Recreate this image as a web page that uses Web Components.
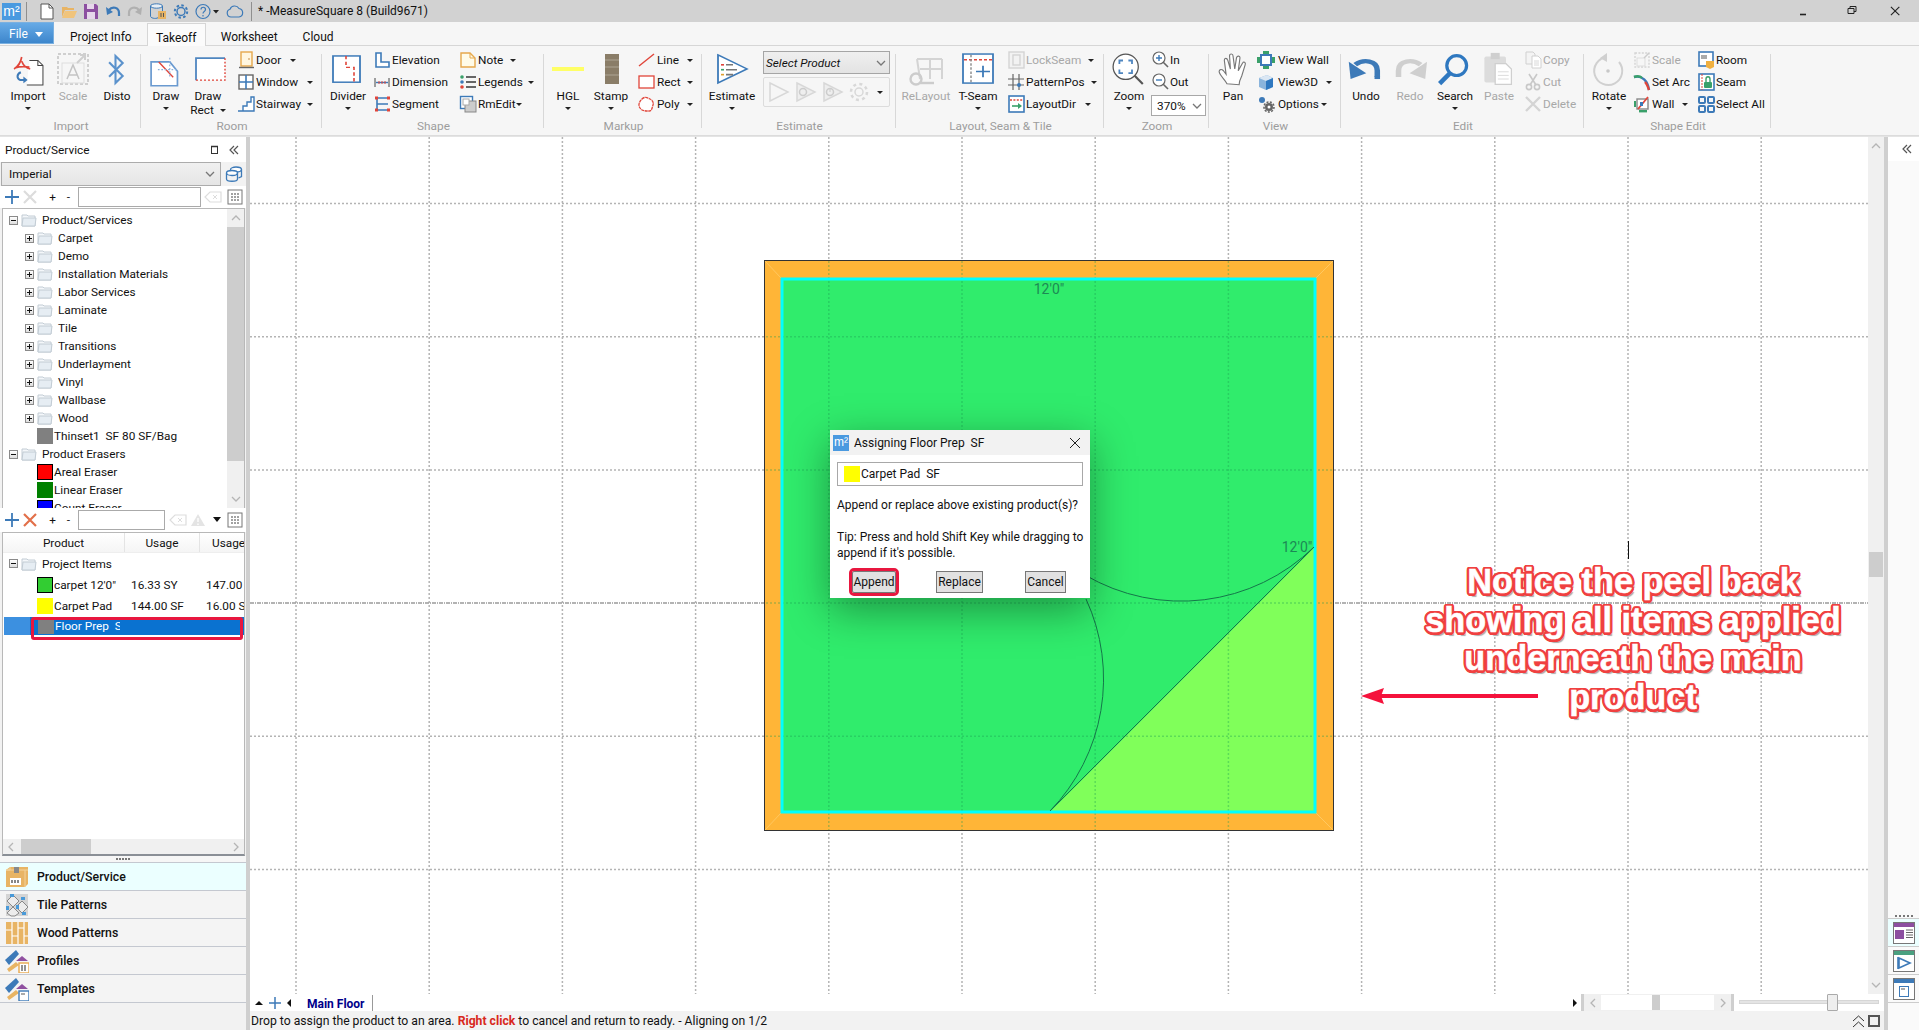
<!DOCTYPE html>
<html>
<head>
<meta charset="utf-8">
<title>MeasureSquare 8</title>
<style>
  html, body { margin: 0; padding: 0; height: 100%; overflow: hidden; background: #fff; }
</style>
</head>
<body>
<ms-app>
  <ms-titlebar slot="title"></ms-titlebar>
  <ms-tabs slot="tabs"></ms-tabs>
  <ms-ribbon slot="ribbon">
    <rb-group label="Import" w="141" pad="4">
      <rb-large icon="import" label="Import" w="48" arrow></rb-large>
      <rb-large icon="scale" label="Scale" w="42" off></rb-large>
      <rb-large icon="disto" label="Disto" w="46"></rb-large>
    </rb-group>
    <rb-group label="Room" w="181" pad="5">
      <rb-large icon="draw" label="Draw" w="40" arrow></rb-large>
      <rb-large icon="drawrect" label="Draw" second="Rect" w="44"></rb-large>
      <rb-col left="7">
        <rb-small icon="door" label="Door" w="62" arrow></rb-small>
        <rb-small icon="window" label="Window" w="79" arrow></rb-small>
        <rb-small icon="stair" label="Stairway" w="79" arrow></rb-small>
      </rb-col>
    </rb-group>
    <rb-group label="Shape" w="222" pad="4">
      <rb-large icon="divider" label="Divider" w="44" arrow></rb-large>
      <rb-col left="3">
        <rb-small icon="elevation" label="Elevation" w="84"></rb-small>
        <rb-small icon="dimension" label="Dimension" w="84"></rb-small>
        <rb-small icon="segment" label="Segment" w="84"></rb-small>
      </rb-col>
      <rb-col left="2">
        <rb-small icon="note" label="Note" w="60" arrow></rb-small>
        <rb-small icon="legends" label="Legends" w="78" arrow></rb-small>
        <rb-small icon="rmedit" label="RmEdit" w="65" arrow></rb-small>
      </rb-col>
    </rb-group>
    <rb-group label="Markup" w="158" pad="4">
      <rb-large icon="hgl" label="HGL" w="40" arrow></rb-large>
      <rb-large icon="stamp" label="Stamp" w="46" arrow></rb-large>
      <rb-col left="4">
        <rb-small icon="line" label="Line" w="58" arrow></rb-small>
        <rb-small icon="rect" label="Rect" w="58" arrow></rb-small>
        <rb-small icon="poly" label="Poly" w="58" arrow></rb-small>
      </rb-col>
    </rb-group>
    <rb-group label="Estimate" w="194" pad="2">
      <rb-large icon="estimate" label="Estimate" w="56" arrow></rb-large>
      <rb-estimate></rb-estimate>
    </rb-group>
    <rb-group label="Layout, Seam &amp; Tile" w="208" pad="2">
      <rb-large icon="relayout" label="ReLayout" w="56" off></rb-large>
      <rb-large icon="tseam" label="T-Seam" w="48" arrow></rb-large>
      <rb-col left="5">
        <rb-small icon="lockseam" label="LockSeam" w="90" arrow off></rb-small>
        <rb-small icon="patternpos" label="PatternPos" w="93" arrow></rb-small>
        <rb-small icon="layoutdir" label="LayoutDir" w="87" arrow></rb-small>
      </rb-col>
    </rb-group>
    <rb-group label="Zoom" w="105" pad="4">
      <rb-large icon="zoom" label="Zoom" w="42" arrow></rb-large>
      <rb-col left="1">
        <rb-small icon="zin" label="In" w="50"></rb-small>
        <rb-small icon="zout" label="Out" w="50"></rb-small>
        <rb-percent></rb-percent>
      </rb-col>
    </rb-group>
    <rb-group label="View" w="132" pad="4">
      <rb-large icon="pan" label="Pan" w="40"></rb-large>
      <rb-col left="4">
        <rb-small icon="viewwall" label="View Wall" w="76" iw="21"></rb-small>
        <rb-small icon="view3d" label="View3D" w="78" iw="21" arrow></rb-small>
        <rb-small icon="options" label="Options" w="73" iw="21" arrow></rb-small>
      </rb-col>
    </rb-group>
    <rb-group label="Edit" w="243" pad="5">
      <rb-large icon="undo" label="Undo" w="40"></rb-large>
      <rb-large icon="redo" label="Redo" w="48" off></rb-large>
      <rb-large icon="search" label="Search" w="42" arrow></rb-large>
      <rb-large icon="paste" label="Paste" w="46" off></rb-large>
      <rb-col left="2">
        <rb-small icon="copy" label="Copy" w="56" off></rb-small>
        <rb-small icon="cut" label="Cut" w="56" off></rb-small>
        <rb-small icon="del" label="Delete" w="56" off></rb-small>
      </rb-col>
    </rb-group>
    <rb-group label="Shape Edit" w="187" pad="4">
      <rb-large icon="rotate" label="Rotate" w="42" arrow></rb-large>
      <rb-col left="3">
        <rb-small icon="scale16" label="Scale" w="62" off></rb-small>
        <rb-small icon="setarc" label="Set Arc" w="62"></rb-small>
        <rb-small icon="wall" label="Wall" w="58" arrow iw="19"></rb-small>
      </rb-col>
      <rb-col left="2">
        <rb-small icon="room" label="Room" w="72"></rb-small>
        <rb-small icon="seam" label="Seam" w="72"></rb-small>
        <rb-small icon="selectall" label="Select All" w="72"></rb-small>
      </rb-col>
    </rb-group>
  </ms-ribbon>

  <ms-sidebar slot="side">
    <tree-row slot="tree" level="0" open label="Product/Services"></tree-row>
    <tree-row slot="tree" level="1" label="Carpet"></tree-row>
    <tree-row slot="tree" level="1" label="Demo"></tree-row>
    <tree-row slot="tree" level="1" label="Installation Materials"></tree-row>
    <tree-row slot="tree" level="1" label="Labor Services"></tree-row>
    <tree-row slot="tree" level="1" label="Laminate"></tree-row>
    <tree-row slot="tree" level="1" label="Tile"></tree-row>
    <tree-row slot="tree" level="1" label="Transitions"></tree-row>
    <tree-row slot="tree" level="1" label="Underlayment"></tree-row>
    <tree-row slot="tree" level="1" label="Vinyl"></tree-row>
    <tree-row slot="tree" level="1" label="Wallbase"></tree-row>
    <tree-row slot="tree" level="1" label="Wood"></tree-row>
    <tree-row slot="tree" swatch="#808080" label="Thinset1  SF 80 SF/Bag"></tree-row>
    <tree-row slot="tree" level="0" open label="Product Erasers"></tree-row>
    <tree-row slot="tree" swatch="#ff0000" edge label="Areal Eraser"></tree-row>
    <tree-row slot="tree" swatch="#008000" label="Linear Eraser"></tree-row>
    <tree-row slot="tree" swatch="#0000ff" edge label="Count Eraser"></tree-row>

    <tree-row slot="items" level="0" open label="Project Items" tall></tree-row>
    <item-row slot="items" swatch="#32cd32" edge label="carpet 12'0&quot;" a="16.33 SY" b="147.00"></item-row>
    <item-row slot="items" swatch="#ffff00" label="Carpet Pad" a="144.00 SF" b="16.00 S"></item-row>
    <item-row slot="items" swatch="#808080" label="Floor Prep  SF" selected></item-row>

    <nav-item slot="nav" icon="box" label="Product/Service" active></nav-item>
    <nav-item slot="nav" icon="tile" label="Tile Patterns"></nav-item>
    <nav-item slot="nav" icon="wood" label="Wood Patterns"></nav-item>
    <nav-item slot="nav" icon="profile" label="Profiles"></nav-item>
    <nav-item slot="nav" icon="template" label="Templates"></nav-item>
  </ms-sidebar>

  <ms-canvas slot="canvas">
    <ms-dialog></ms-dialog>
    <ms-callout></ms-callout>
  </ms-canvas>
  <ms-tabbar slot="tabbar"></ms-tabbar>
  <ms-status slot="status"></ms-status>
  <ms-strip slot="strip"></ms-strip>
</ms-app>

<script>
const BLUE = '#3d7ab8', RED = '#e0453a', GREY = '#cfcfcf', DARK = '#555';
const fit = (t, body) => `<g transform="${t}">${body}</g>`;

// large ribbon icons, drawn in a 40x38 box
const large = {
  import: fit('translate(3.5 4.3) scale(.85)', `<path d="M21 6h10l6 6v23H18" fill="#fff" stroke="#444" stroke-width="1.2"/><path d="M31 6v6h6" fill="none" stroke="#444" stroke-width="1.2"/><path d="M12 2c-1 6-4 11-9 14M12 7c2 5 5 8 10 9M4 15c6-2 11-2 17-1" fill="none" stroke="${RED}" stroke-width="2"/><path d="M11 20c-5 2-5 7-1 9h7" fill="none" stroke="${BLUE}" stroke-width="2.4"/><path d="M14 25l5 4-5 4z" fill="${BLUE}"/>`),
  scale: `<rect x="5" y="3" width="30" height="30" fill="none" stroke="${GREY}" stroke-width="2" stroke-dasharray="3 2"/><path d="M14 28l6-14 6 14M16 24h8" fill="none" stroke="#c4c4c4" stroke-width="1.5"/><rect x="9" y="12" width="22" height="20" fill="none" stroke="#ddd"/><path d="M24 12l8-8M27 4h5v5" fill="none" stroke="${GREY}" stroke-width="2"/>`,
  disto: fit('translate(2.5 3.3) scale(.8)', `<path d="M12 10l17 17-9 9V2l9 9-17 17" fill="none" stroke="#5b92cc" stroke-width="2.6"/>`),
  draw: fit('translate(0 5) scale(.85)', `<path d="M6 7h22l9 11v17H6z" fill="#fff" stroke="#6a9ad0" stroke-width="2"/><path d="M15 7l17 18" stroke="${RED}" stroke-width="1.6"/><path d="M14 16h24M28 2v22" stroke="#8ab0dc" stroke-width="1.4" stroke-dasharray="2 2"/>`),
  drawrect: fit('translate(4 1) scale(1 .88)', `<rect x="4" y="7" width="29" height="25" fill="#fff"/><path d="M4 32V7h29" fill="none" stroke="#4f86c0" stroke-width="1.8"/><path d="M33 7v25H4" fill="none" stroke="${RED}" stroke-width="1.4" stroke-dasharray="2 2"/>`),
  divider: fit('translate(-2 2.5) scale(1 .82)', `<rect x="7" y="3" width="27" height="32" fill="#fff" stroke="#3d7ab8" stroke-width="1.8"/><path d="M20 3v14h8v18" fill="none" stroke="${RED}" stroke-width="1.6" stroke-dasharray="4 3"/>`),
  hgl: `<rect x="4" y="16" width="32" height="4" fill="#ffff66"/>`,
  stamp: `<rect x="14" y="3" width="14" height="30" fill="#8a7d68"/><path d="M14 9h14M14 16h14M14 24h14" stroke="#9c917e" stroke-width="2"/>`,
  estimate: fit('translate(-2 1.5) scale(1 .82)', `<path d="M8 3l29 17-29 17z" fill="#fff" stroke="#3d7ab8" stroke-width="1.8"/><path d="M11 15h3" stroke="${RED}" stroke-width="2"/><path d="M11 21h3" stroke="#3aa06a" stroke-width="2"/><path d="M11 27h3" stroke="#e0a030" stroke-width="2"/><path d="M16 15h7M16 21h11M16 27h7" stroke="#777" stroke-width="2"/>`),
  relayout: `<path d="M11 8h25M11 8l3 20M24 8v20M36 8v20M14 18h22" fill="none" stroke="#d4d4d4" stroke-width="2"/><circle cx="10" cy="28" r="5.500" fill="none" stroke="#ccc" stroke-width="2.400"/><path d="M14 32h14" stroke="#ccc" stroke-width="2.400"/>`,
  tseam: fit('translate(0 2.2) scale(1 .83)', `<rect x="5" y="1" width="30" height="35" fill="#fff" stroke="#3d7ab8" stroke-width="1.8"/><path d="M6 8h28" stroke="${RED}" stroke-width="1.8" stroke-dasharray="3 2"/><path d="M13 2v33" stroke="#888" stroke-width="1.4" stroke-dasharray="3 2"/><path d="M25 15v14M18 22h14" stroke="#3d7ab8" stroke-width="1.8"/>`),
  zoom: fit('translate(.5 .5) scale(.9)', `<circle cx="18" cy="17" r="14" fill="#fff" stroke="#555" stroke-width="1.4"/><path d="M28 27l9 9" stroke="#555" stroke-width="2.4"/><path d="M11 14v-4h4M21 10h4v4M25 20v4h-4M15 24h-4v-4" fill="none" stroke="#4f86c0" stroke-width="2"/>`),
  pan: fit('translate(3.5 1.5) scale(.87)', `<path d="M12 36c-2-5-8-9-9-14 0-3 3-3 5-1l3 4L9 9c0-3 3-3 4 0l3 10-1-15c0-3 4-3 4 0l2 15 2-13c1-3 4-2 4 0l-2 15 5-9c1-2 4-1 3 2l-4 13c-2 4-3 6-3 10z" fill="#fff" stroke="#777" stroke-width="1.3"/>`),
  undo: fit('translate(0 5) scale(.92 .72)', `<path d="M10 12c9-8 24-6 24 8v9" fill="none" stroke="#3d7ab8" stroke-width="6"/><path d="M37 30h-6" stroke="#3d7ab8" stroke-width="4"/><path d="M3 8l2 24 17-8z" fill="#3d7ab8"/>`),
  redo: fit('translate(3 5) scale(.92 .72)', `<path d="M30 12c-9-8-24-6-24 8v9" fill="none" stroke="#cfcfcf" stroke-width="6"/><path d="M37 8l-2 24-17-8z" fill="#cfcfcf"/>`),
  search: fit('translate(1 2) scale(.9)', `<circle cx="23" cy="14" r="11" fill="none" stroke="#2f78c0" stroke-width="3.6"/><path d="M15 23L4 34" stroke="#2f78c0" stroke-width="5"/>`),
  paste: fit('translate(0 1) scale(.9)', `<rect x="6" y="5" width="24" height="29" rx="2" fill="#dcdcdc"/><rect x="13" y="1" width="10" height="7" fill="#cfcfcf"/><path d="M18 13h12l6 6v17H18z" fill="#fff" stroke="#cfcfcf" stroke-width="1.4"/><path d="M21 22h12M21 26h12M21 30h12" stroke="#d8d8d8"/>`),
  rotate: `<path d="M18 6a14 14 0 1 0 12 5" fill="none" stroke="#d0d0d0" stroke-width="2"/><path d="M18 2v9l-7-4z" fill="#d0d0d0"/><circle cx="19" cy="20" r="1.800" fill="#c8c8c8"/>`
};

// small ribbon icons, 18x18
const small = {
  door: `<rect x="4" y="1" width="11" height="14" fill="#fff6e0" stroke="#e6a84c" stroke-width="1.4"/><path d="M2 16.5h15" stroke="#666" stroke-width="1.4"/><circle cx="12" cy="8" r=".8" fill="#c08030"/>`,
  window: `<rect x="2" y="2" width="14" height="14" fill="#fff" stroke="#666" stroke-width="1.4"/><path d="M9 2v14M2 9h14" stroke="#3d7ab8" stroke-width="1.6"/>`,
  stair: `<path d="M1 16h5v-5h4V7h4V2h3v14z" fill="#fff" stroke="#3d7ab8" stroke-width="1.4"/>`,
  elevation: `<path d="M3 2h5v9h8v5H3z" fill="#fff" stroke="#3d7ab8" stroke-width="1.6"/>`,
  dimension: `<path d="M2 5v9M16 5v9" stroke="#888" stroke-width="1.6"/><path d="M3 9.5h12" stroke="#3d7ab8" stroke-width="1.4"/><path d="M6 8v3M9 8v3M12 8v3" stroke="${RED}" stroke-width="1"/>`,
  segment: `<path d="M4 3h11M4 9h11M4 15h11M4 3v12" fill="none" stroke="#3d7ab8" stroke-width="1.6"/><rect x="2" y="1.5" width="3" height="3" fill="${RED}"/><rect x="14" y="1.5" width="3" height="3" fill="${RED}"/><rect x="2" y="13.5" width="3" height="3" fill="${RED}"/><rect x="14" y="13.5" width="3" height="3" fill="${RED}"/>`,
  note: `<path d="M2 2h9l5 5v9H2z" fill="#fffbe8" stroke="#e6a84c" stroke-width="1.4"/><path d="M11 2v5h5" fill="none" stroke="#e6a84c"/>`,
  legends: `<circle cx="3" cy="4" r="1.8" fill="#3aa06a"/><circle cx="3" cy="9" r="1.8" fill="#3d7ab8"/><circle cx="3" cy="14" r="1.8" fill="${RED}"/><path d="M7 4h10M7 9h10M7 14h10" stroke="#666" stroke-width="2"/>`,
  rmedit: `<rect x="1.5" y="1.5" width="12" height="12" fill="#fff" stroke="#3d7ab8" stroke-width="1.4"/><rect x="6" y="6" width="11" height="11" fill="#ccc" stroke="#888"/><rect x="4" y="4" width="6" height="6" fill="#fff" stroke="#aaa"/>`,
  line: `<path d="M1 15L16 3" stroke="${RED}" stroke-width="1.4"/>`,
  rect: `<rect x="1" y="3" width="15" height="12" fill="#fff" stroke="${RED}" stroke-width="1.3"/>`,
  poly: `<path d="M4 4c3-3 6-1 8 0s4 3 3 6-1 6-4 6-7 0-9-3-1-6 2-9z" fill="#fff" stroke="${RED}" stroke-width="1.3" stroke-dasharray="3 .6"/>`,
  lockseam: `<rect x="2" y="1" width="15" height="16" fill="#f2f2f2" stroke="#d4d4d4" stroke-width="1.4"/><rect x="6" y="4" width="7" height="10" fill="none" stroke="#d4d4d4" stroke-width="1.4"/>`,
  patternpos: `<path d="M6 1v16M12 1v16M1 6h16M1 12h16" stroke="#666" stroke-width="1.2"/><circle cx="12" cy="12" r="2" fill="#3d7ab8"/>`,
  layoutdir: `<rect x="2" y="1" width="15" height="16" fill="#fff" stroke="#3d7ab8" stroke-width="1.6"/><path d="M3 5h13" stroke="${RED}" stroke-dasharray="2 1.4" stroke-width="1.4"/><path d="M5 11h8" stroke="#3aa06a" stroke-width="1.6"/><path d="M11 8l4 3-4 3z" fill="#3aa06a"/>`,
  zin: `<circle cx="8" cy="7" r="6" fill="#fff" stroke="#666" stroke-width="1.2"/><path d="M12 11l5 5" stroke="#666" stroke-width="1.6"/><path d="M8 4v6M5 7h6" stroke="#3d7ab8" stroke-width="1.4"/>`,
  zout: `<circle cx="8" cy="7" r="6" fill="#fff" stroke="#666" stroke-width="1.2"/><path d="M12 11l5 5" stroke="#666" stroke-width="1.6"/><path d="M5 7h6" stroke="#3d7ab8" stroke-width="1.4"/>`,
  viewwall: `<rect x="4" y="4" width="10" height="10" fill="#fff" stroke="#3d7ab8" stroke-width="2"/><rect x="0" y="6" width="3" height="6" fill="#3aa06a"/><rect x="15" y="6" width="3" height="6" fill="#3aa06a"/><rect x="6" y="0" width="6" height="3" fill="#3aa06a"/><rect x="6" y="15" width="6" height="3" fill="#3aa06a"/>`,
  view3d: `<path d="M2 5l8-3 6 3v9l-7 3-7-3z" fill="#8ab4dc"/><path d="M2 5l7 3 7-3-6-3z" fill="#dbe7f3"/><path d="M9 8v9l7-3V5z" fill="#2f78c0"/>`,
  options: `<circle cx="5" cy="5" r="3" fill="#3d7ab8"/><circle cx="12" cy="12" r="4" fill="#666"/><circle cx="12" cy="12" r="5" fill="none" stroke="#666" stroke-width="1.6" stroke-dasharray="2 1.4"/><circle cx="12" cy="12" r="1.5" fill="#fff"/>`,
  copy: `<path d="M2 1h7l2 2v10H2z" fill="#f4f4f4" stroke="#d0d0d0"/><path d="M8 5h6l3 3v9H8z" fill="#fff" stroke="#d0d0d0"/><path d="M10 10h5M10 12h5M10 14h5" stroke="#d8d8d8"/>`,
  cut: `<path d="M5 1l7 11M13 1L6 12" stroke="#c8c8c8" stroke-width="1.6"/><circle cx="5" cy="14" r="2.6" fill="none" stroke="#c8c8c8" stroke-width="1.6"/><circle cx="13" cy="14" r="2.6" fill="none" stroke="#c8c8c8" stroke-width="1.6"/>`,
  del: `<path d="M2 2l14 14M16 2L2 16" stroke="#d4d4d4" stroke-width="2.4"/>`,
  scale16: `<rect x="2" y="2" width="14" height="14" fill="none" stroke="#d4d4d4" stroke-width="1.4" stroke-dasharray="2 1.4"/><rect x="4" y="7" width="8" height="8" fill="none" stroke="#ddd"/><path d="M11 7l5-5" stroke="#ccc" stroke-width="1.4"/>`,
  setarc: `<path d="M1 4c8-2 14 4 15 13" fill="none" stroke="#3d7ab8" stroke-width="2.4"/><path d="M1 4c3-1 6-1 8 1" fill="none" stroke="#3aa06a" stroke-width="2.4"/><path d="M12 9c2 2 3 5 4 8" fill="none" stroke="${RED}" stroke-width="2.4"/>`,
  wall: `<rect x="4" y="4" width="11" height="10" fill="#fff" stroke="#888" stroke-width="1.4"/><path d="M5 14L15 2" stroke="${RED}" stroke-width="1.8"/><rect x="1" y="6" width="2" height="6" fill="#3aa06a"/><rect x="6" y="15" width="8" height="2.4" fill="#3aa06a"/><rect x="7" y="7" width="3" height="4" fill="#3d7ab8"/>`,
  room: `<rect x="2" y="1" width="14" height="14" fill="#fff" stroke="#3d7ab8" stroke-width="1.6"/><rect x="4" y="4" width="6" height="4" fill="#aaa"/><path d="M9 10h8v6l-4 2-4-2z" fill="#f0b040"/>`,
  seam: `<rect x="2" y="1" width="15" height="16" fill="#fff" stroke="#3d7ab8" stroke-width="1.6"/><path d="M5 1v16" stroke="${RED}" stroke-width="1" stroke-dasharray="2 1"/><rect x="7" y="9" width="8" height="6" rx="1" fill="#3aa06a"/><path d="M9 9V6c0-3 4-3 4 0v3" fill="none" stroke="#3aa06a" stroke-width="1.4"/>`,
  selectall: `<rect x="2" y="2" width="6" height="6" rx="1" fill="none" stroke="#3d7ab8" stroke-width="2"/><rect x="11" y="2" width="6" height="6" rx="1" fill="none" stroke="#3d7ab8" stroke-width="2"/><rect x="2" y="11" width="6" height="6" rx="1" fill="none" stroke="#3d7ab8" stroke-width="2"/><rect x="11" y="11" width="6" height="6" rx="1" fill="none" stroke="#3d7ab8" stroke-width="2"/>`
};

// left navigation icons, 24x24
const navIcons = {
  box: `<path d="M1 5l4-3h18v17l-3 3H1z" fill="#e8b464"/><path d="M5 2v3H1M20 5h3M20 5v17M1 5h19" stroke="#f3d39c" fill="none"/><rect x="9" y="2" width="5" height="6" fill="#888"/><rect x="5" y="13" width="11" height="7" fill="#fff"/><path d="M7 15v3M10 15v3M13 15v3" stroke="#555" stroke-width="1.4"/>`,
  tile: `<rect x="1" y="1" width="22" height="22" fill="#d4d4d4"/><path d="M8 2l6 6-6 6-6-6zM17 8l6 6-6 6-6-6zM8 14l6 6-4 3H6l-4-3z" fill="#ececec" stroke="#888"/><rect x="5" y="1" width="4" height="3" fill="#4a9ad8"/><rect x="16" y="4" width="4" height="3" fill="#4a9ad8"/><rect x="1" y="13" width="3" height="4" fill="#4a9ad8"/><rect x="11" y="12" width="3" height="4" fill="#4a9ad8"/><rect x="17" y="19" width="4" height="3" fill="#4a9ad8"/>`,
  wood: `<rect x="1" y="1" width="22" height="22" fill="#e8b464"/><path d="M7 1v22M13 1v22M19 1v22M1 9h6M13 7h6M7 15h6M19 15h4" stroke="#fff" stroke-width="1.2"/>`,
  profile: `<path d="M0 11L11 1l3 4L4 16z" fill="#3d7ab8"/><path d="M17 7l6 5H11z" fill="#9050a0"/><path d="M4 23l-2-3 9-7 3 3z" fill="#e8b464"/><rect x="14" y="14" width="10" height="10" fill="#fff" stroke="#e8a84c" stroke-width="1.4"/><path d="M17 16v6M20 16v6" stroke="#666" stroke-width="1.4"/>`,
  template: `<path d="M0 11L11 1l3 4L4 16z" fill="#3d7ab8"/><path d="M17 7l6 5H11z" fill="#9050a0"/><path d="M4 23l-2-3 9-7 3 3z" fill="#e8b464"/><rect x="14" y="14" width="10" height="10" fill="#fff" stroke="#3d7ab8" stroke-width="1.4"/><rect x="16" y="16" width="4" height="2" fill="#aaa"/>`
};

const folder = `<svg width="16" height="14" viewBox="0 0 16 14"><path d="M1 2h5l1 1h7v10H1z" fill="#f4f7fa" stroke="#c2ccd4"/><path d="M1 13l1-8h13l-1 8z" fill="#e6edf3" stroke="#c2ccd4"/></svg>`;
const chev = (d, c) => `<svg width="12" height="12" viewBox="0 0 12 12"><path d="${d}" fill="none" stroke="${c || '#b5b5b5'}" stroke-width="1.3"/></svg>`;
const CH_UP = 'M2 8l4-4 4 4', CH_DOWN = 'M2 4l4 4 4-4', CH_LEFT = 'M8 2L4 6l4 4', CH_RIGHT = 'M4 2l4 4-4 4';

function def(name, html, init) {
  let tmpl = document.createElement('template');
  tmpl.innerHTML = html;
  customElements.define(name, class extends HTMLElement {
    constructor() {
      super();
      this.attachShadow({mode: 'open'}).appendChild(tmpl.content.cloneNode(true));
    }
    connectedCallback() {
      if (init) init(this, this.shadowRoot);
    }
  });
}

def('ms-app', `
  <style>
    :host {
      display: grid;
      width: 1919px;
      height: 1030px;
      overflow: hidden;
      grid-template-columns: 246px 4px 1fr 4px 31px;
      grid-template-rows: 22px 24px 90px 1px 1fr 17px 19px;
      font: 11.800px Roboto, "Liberation Sans", sans-serif;
      color: #111;
      background: #fff;
    }
    ::slotted([slot=title]) { grid-column: 1 / -1; }
    ::slotted([slot=tabs]) { grid-column: 1 / -1; }
    ::slotted([slot=ribbon]) { grid-column: 1 / -1; }
    .rule { grid-column: 1 / -1; background: #e4e4e4; }
    ::slotted([slot=side]) { grid-column: 1; grid-row: 5 / 8; }
    .bar { grid-column: 2; grid-row: 5 / 8; background: #cfcfcf; }
    ::slotted([slot=canvas]) { grid-column: 3; grid-row: 5; }
    ::slotted([slot=tabbar]) { grid-column: 3; grid-row: 6; }
    ::slotted([slot=status]) { grid-column: 3; grid-row: 7; }
    .bar2 { grid-column: 4; grid-row: 5 / 8; background: #cfcfcf; }
    ::slotted([slot=strip]) { grid-column: 5; grid-row: 5 / 8; }
  </style>
  <slot name="title"></slot>
  <slot name="tabs"></slot>
  <slot name="ribbon"></slot>
  <div class="rule"></div>
  <slot name="side"></slot>
  <div class="bar"></div>
  <slot name="canvas"></slot>
  <slot name="tabbar"></slot>
  <slot name="status"></slot>
  <div class="bar2"></div>
  <slot name="strip"></slot>
`);

def('ms-titlebar', `
  <style>
    :host { display: flex; align-items: center; background: #d2d2d2; height: 22px; font-size: 12px; white-space: nowrap; }
    .logo { width: 19px; height: 17px; margin-left: 2px; background: #4a9ae0; color: #fff; font: 14px/16px "Liberation Sans", sans-serif; text-align: center; }
    .sep { width: 1px; height: 19px; background: #8f8f8f; margin: 0 5px; }
    svg { display: block; }
    .qat { display: flex; align-items: center; gap: 6px; margin-left: 7px; }
    .t { margin-left: 1px; }
    .win { margin-left: auto; display: flex; align-items: center; }
    .win svg { width: 47px; height: 12px; }
  </style>
  <div class="logo">m²</div><div class="sep"></div>
  <div class="qat">
    <svg width="16" height="17" viewBox="0 0 16 17"><path d="M2 1h8l4 4v11H2z" fill="#fff" stroke="#555"/><path d="M10 1v4h4" fill="none" stroke="#555"/></svg>
    <svg width="16" height="17" viewBox="0 0 16 17"><path d="M1 4h5l1 1h6v2H4l-3 7z" fill="#e8b464"/><path d="M4 8h12l-3 7H1z" fill="#f0c47c"/></svg>
    <svg width="16" height="17" viewBox="0 0 16 17"><path d="M1 1h12l2 2v13H1z" fill="#8c4fa0"/><rect x="4" y="1" width="7" height="5" fill="#e6d6ea"/><rect x="4" y="9" width="8" height="7" fill="#e6d6ea"/></svg>
    <svg width="16" height="17" viewBox="0 0 16 17"><path d="M4 7c3-4 10-3 10 3v3" fill="none" stroke="#3d7ab8" stroke-width="2.2"/><path d="M1 4l1 8 6-3z" fill="#3d7ab8"/></svg>
    <svg width="16" height="17" viewBox="0 0 16 17"><path d="M12 7C9 3 2 4 2 10v3" fill="none" stroke="#b0b0b0" stroke-width="2.2"/><path d="M15 4l-1 8-6-3z" fill="#b0b0b0"/></svg>
    <svg width="18" height="17" viewBox="0 0 18 17"><ellipse cx="7.500" cy="3" rx="6" ry="2.200" fill="#e8eef4" stroke="${BLUE}"/><path d="M1.500 3v10c0 3 8 3 8 1M13.500 3v5" fill="none" stroke="${BLUE}"/><rect x="9" y="8" width="8" height="8" fill="#e8b464"/><path d="M12 10v4M14.500 10v4" stroke="#555"/></svg>
    <svg width="16" height="17" viewBox="0 0 16 17"><circle cx="8" cy="8.500" r="4" fill="none" stroke="${BLUE}" stroke-width="1.500"/><circle cx="8" cy="8.500" r="6.200" fill="none" stroke="${BLUE}" stroke-width="2" stroke-dasharray="2.500 2.300"/></svg>
    <svg width="25" height="17" viewBox="0 0 25 17"><circle cx="8" cy="8.500" r="7" fill="none" stroke="${BLUE}" stroke-width="1.200"/><path d="M6 6.500c0-3 4.500-3 4.500 0 0 2-2.500 2-2.500 4M8 12v1.500" fill="none" stroke="${BLUE}" stroke-width="1.200"/><path d="M18 7h6l-3 3.500z" fill="#222"/></svg>
    <svg width="18" height="17" viewBox="0 0 18 17"><path d="M5 14a4 4 0 0 1-1-7.800A5 5 0 0 1 13 5.500a4.300 4.300 0 0 1 0 8.500z" fill="none" stroke="${BLUE}" stroke-width="1.200"/></svg>
  </div>
  <div class="sep" style="margin-left:7px"></div>
  <span class="t">* -MeasureSquare 8 (Build9671)</span>
  <div class="win">
    <svg viewBox="0 0 47 12"><path d="M19 9.500h6" stroke="#222" stroke-width="1.600"/></svg>
    <svg viewBox="0 0 47 12"><path d="M20 3.500h6v5h-6zM22 3.500V1.500h6v5h-2" fill="none" stroke="#222"/></svg>
    <svg viewBox="0 0 47 12" style="width:44px"><path d="M17 1.500l9 9M26 1.500l-9 9" stroke="#222" stroke-width="1.200"/></svg>
  </div>
`);

def('ms-tabs', `
  <style>
    :host { display: flex; align-items: flex-start; height: 24px; background: #f6f6f6; box-sizing: border-box; border-bottom: 1px solid #d6d6d6; font-size: 12px; white-space: nowrap; }
    .file { width: 54px; height: 22px; background: linear-gradient(#66aae6, #3d86cc); color: #fff; border: 1px solid #7ab0e0; border-left: 0; box-sizing: border-box; display: flex; align-items: center; gap: 7px; padding: 2px 0 0 9px; }
    .file i { border: 4px solid transparent; border-top: 5px solid #fff; border-bottom: 0; }
    span { height: 24px; box-sizing: border-box; padding-top: 5px; line-height: 20px; }
    .on { background: #fbfbfb; margin-top: 1px; padding-top: 4px; width: 59px; text-align: center; border: 1px solid #d6d6d6; border-bottom: 1px solid #fbfbfb; }
  </style>
  <div class="file">File <i></i></div>
  <span style="margin-left:16px">Project Info</span>
  <span class="on" style="margin-left:15px">Takeoff</span>
  <span style="margin-left:15px">Worksheet</span>
  <span style="margin-left:25px">Cloud</span>
`);

def('ms-ribbon', `
  <style>
    :host { display: flex; height: 90px; background: #f6f6f6; box-sizing: border-box; border-bottom: 1px solid #dcdcdc; }
  </style>
  <slot></slot>
`);

def('rb-group', `
  <style>
    :host { display: flex; flex-direction: column; height: 89px; box-sizing: border-box; position: relative; }
    .c { display: flex; height: 72px; padding-top: 5px; box-sizing: border-box; }
    .l { height: 16px; line-height: 16px; text-align: center; color: #9d9d9d; padding-left: 1px; }
    .s { position: absolute; right: 0; top: 8px; height: 74px; width: 1px; background: #d8d8d8; }
  </style>
  <div class="c"><slot></slot></div>
  <div class="l"></div>
  <div class="s"></div>
`, (el, root) => {
  el.style.width = el.getAttribute('w') + 'px';
  root.querySelector('.c').style.paddingLeft = el.getAttribute('pad') + 'px';
  root.querySelector('.l').textContent = el.getAttribute('label');
});

def('rb-large', `
  <style>
    :host { display: flex; flex-direction: column; align-items: center; flex: none; }
    svg { display: block; width: 40px; height: 38px; flex: none; }
    span { line-height: 14px; height: 14px; white-space: nowrap; }
    :host([off]) span { color: #a8a8a8; }
    i { display: block; margin-top: 4px; border: 3px solid transparent; border-top: 3.5px solid #222; border-bottom: 0; }
    i[hidden] { display: none; }
    b { display: inline-block; vertical-align: middle; margin-left: 3px; border: 3px solid transparent; border-top: 3.5px solid #222; border-bottom: 0; }
  </style>
  <svg viewBox="0 0 40 38"></svg>
  <span class="a"></span>
  <span class="b" hidden></span>
  <i hidden></i>
`, (el, root) => {
  el.style.width = el.getAttribute('w') + 'px';
  root.querySelector('svg').innerHTML = large[el.getAttribute('icon')];
  root.querySelector('.a').textContent = el.getAttribute('label');
  if (el.hasAttribute('arrow')) root.querySelector('i').hidden = false;
  if (el.hasAttribute('second')) {
    let b = root.querySelector('.b');
    b.hidden = false;
    b.innerHTML = el.getAttribute('second') + ' <b></b>';
  }
});

def('rb-col', `
  <style>
    :host { display: flex; flex-direction: column; gap: 4px; flex: none; }
  </style>
  <slot></slot>
`, el => { el.style.marginLeft = el.getAttribute('left') + 'px'; });

def('rb-small', `
  <style>
    :host { display: flex; align-items: center; height: 18px; flex: none; white-space: nowrap; box-sizing: border-box; }
    svg { display: block; width: 18px; height: 18px; flex: none; margin-right: 1px; }
    :host([off]) span { color: #a8a8a8; }
    i { margin-left: auto; margin-right: 3px; border: 3px solid transparent; border-top: 3.5px solid #222; border-bottom: 0; }
  </style>
  <svg viewBox="0 0 18 18"></svg><span></span><i hidden></i>
`, (el, root) => {
  el.style.width = el.getAttribute('w') + 'px';
  let s = root.querySelector('svg');
  s.innerHTML = small[el.getAttribute('icon')];
  if (el.hasAttribute('iw')) s.style.marginRight = (el.getAttribute('iw') - 18) + 'px';
  root.querySelector('span').textContent = el.getAttribute('label');
  if (el.hasAttribute('arrow')) root.querySelector('i').hidden = false;
});

def('rb-estimate', `
  <style>
    :host { display: flex; flex-direction: column; gap: 3px; width: 127px; margin-left: 3px; flex: none; }
    .sel { height: 23px; box-sizing: border-box; border: 1px solid #a5a5a5; background: linear-gradient(#efefef, #e3e3e3); display: flex; align-items: center; padding: 0 2px; font-style: italic; justify-content: space-between; white-space: nowrap; }
    .box { height: 30px; box-sizing: border-box; border: 1px solid #dcdcdc; border-radius: 2px; display: flex; align-items: center; gap: 5px; padding: 0 4px; }
    .box svg { display: block; }
    .box i { margin-left: auto; margin-right: 2px; border: 3px solid transparent; border-top: 3.5px solid #222; border-bottom: 0; }
  </style>
  <div class="sel">Select Product ${chev(CH_DOWN, '#777')}</div>
  <div class="box">
    <svg width="22" height="22" viewBox="0 0 22 22"><path d="M2 2l18 9-18 9z" fill="none" stroke="#d8d8d8" stroke-width="1.500"/></svg>
    <svg width="22" height="22" viewBox="0 0 22 22"><path d="M2 2l18 9-18 9z" fill="#eee" stroke="#d8d8d8" stroke-width="1.500"/><circle cx="8" cy="11" r="3.500" fill="none" stroke="#ccc" stroke-width="1.500"/></svg>
    <svg width="22" height="22" viewBox="0 0 22 22"><path d="M2 2l18 9-18 9z" fill="#eee" stroke="#d8d8d8" stroke-width="1.500"/><circle cx="8" cy="11" r="3.500" fill="none" stroke="#ccc" stroke-width="1.500"/><path d="M8 7v4" stroke="#ccc"/></svg>
    <svg width="20" height="22" viewBox="0 0 20 22"><circle cx="10" cy="11" r="4" fill="none" stroke="#d8d8d8" stroke-width="1.500"/><circle cx="10" cy="11" r="8" fill="none" stroke="#d8d8d8" stroke-width="2.500" stroke-dasharray="3 3.300"/></svg>
    <i></i>
  </div>
`);

def('rb-percent', `
  <style>
    :host { display: flex; align-items: center; justify-content: space-between; width: 55px; height: 21px; box-sizing: border-box; border: 1px solid #a8a8a8; background: #fff; padding: 0 2px 0 5px; }
    svg { display: block; }
  </style>
  370% ${chev(CH_DOWN, '#777')}
`);

// ------ left side ------
def('ms-sidebar', `
  <style>
    :host { display: flex; flex-direction: column; background: #f2f2f2; min-height: 0; white-space: nowrap; }
    svg { display: block; }
    .head { display: flex; align-items: center; height: 25px; padding: 0 5px; background: #fff; }
    .head span { flex: 1; }
    .combo { display: flex; align-items: center; height: 24px; }
    .sel { width: 220px; margin-left: 1px; box-sizing: border-box; height: 24px; border: 1px solid #acacac; background: linear-gradient(#f0f0f0, #e5e5e5); display: flex; align-items: center; justify-content: space-between; padding: 0 4px 0 7px; }
    .combo svg { margin-left: 4px; }
    .tool { display: flex; align-items: center; height: 22px; background: #fff; padding-left: 4px; }
    .tool .p { width: 15px; text-align: center; }
    input { display: block; box-sizing: border-box; height: 20px; border: 1px solid #aaa; padding: 0; background: #fff; }
    .tree { height: 300px; margin: 0 1px 0 2px; border: 1px solid #b8b8b8; border-bottom: 0; box-sizing: border-box; background: #fff; display: flex; overflow: hidden; }
    .rows { flex: 1; min-width: 0; padding-top: 2px; }
    .vs { width: 17px; background: #f0f0f0; display: flex; flex-direction: column; align-items: center; justify-content: space-between; position: relative; }
    .vs b { display: block; width: 17px; height: 234px; background: #cdcdcd; position: absolute; top: 18px; }
    .vs span { height: 18px; display: flex; align-items: center; }
    .items { flex: 1; min-height: 0; margin: 0 1px 0 2px; border: 1px solid #b8b8b8; border-bottom: 2px solid #8a8f96; background: #fff; display: flex; flex-direction: column; position: relative; overflow: hidden; }
    .th { display: grid; grid-template-columns: 122px 75px 1fr; height: 20px; background: linear-gradient(#fff, #f5f5f5); border-bottom: 1px solid #eee; box-sizing: border-box; flex: none; }
    .th span { text-align: center; line-height: 20px; border-right: 1px solid #e4e4e4; overflow: hidden; }
    .th span:last-child { text-align: left; padding-left: 12px; border: 0; }
    .list { flex: 1; min-height: 0; }
    .hs { flex: none; height: 15px; background: #f0f0f0; display: flex; align-items: center; justify-content: space-between; padding: 0 2px; position: relative; }
    .hs b { position: absolute; left: 18px; width: 70px; height: 15px; background: #cdcdcd; }
    .mark { position: absolute; left: 28px; top: 84px; width: 212px; height: 23px; box-sizing: border-box; border: 3px solid #e8173f; border-radius: 3px; }
    .grip { height: 6px; display: flex; align-items: center; justify-content: center; gap: 1px; background: #f6f6f6; }
    .grip i { width: 2px; height: 2px; background: #777; }
    .nav { border-top: 1px solid #c4c8d0; }
  </style>
  <div class="head">
    <span>Product/Service</span>
    <svg width="12" height="12" viewBox="0 0 12 12" style="margin-right:6px"><rect x="2.500" y="2.500" width="6" height="7" fill="none" stroke="#333"/><path d="M2 2.500h7" stroke="#333" stroke-width="1.500"/></svg>
    <svg width="14" height="14" viewBox="0 0 14 14"><path d="M7 3L3 7l4 4M11 3L7 7l4 4" fill="none" stroke="#555" stroke-width="1.200"/></svg>
  </div>
  <div class="combo">
    <div class="sel">Imperial ${chev(CH_DOWN, '#777')}</div>
    <svg width="18" height="18" viewBox="0 0 18 18"><ellipse cx="11" cy="4.500" rx="5.500" ry="2.500" fill="#fff" stroke="${BLUE}" stroke-width="1.300"/><path d="M16.500 4.500v7l-3 1.500" fill="none" stroke="${BLUE}" stroke-width="1.300"/><ellipse cx="7" cy="8" rx="5.500" ry="2.500" fill="#fff" stroke="${BLUE}" stroke-width="1.300"/><path d="M1.500 8v6c0 3 11 3 11 0V8" fill="none" stroke="${BLUE}" stroke-width="1.300"/></svg>
  </div>
  <div class="tool">
    <svg width="16" height="16" viewBox="0 0 16 16"><path d="M8 1v14M1 8h14" stroke="${BLUE}" stroke-width="1.800"/></svg>
    <svg width="16" height="16" viewBox="0 0 16 16" style="margin-left:2px"><path d="M2 2l12 12M14 2L2 14" stroke="#dcdcdc" stroke-width="2.200"/></svg>
    <span class="p" style="margin-left:7px">+</span><span class="p" style="margin-left:1px">-</span>
    <input style="width:123px;margin-left:2px">
    <svg width="18" height="14" viewBox="0 0 18 14" style="margin-left:3px"><path d="M6 2h11v10H6L1 7z" fill="none" stroke="#ddd" stroke-width="1.200"/><path d="M9 5l4 4M13 5l-4 4" stroke="#ddd"/></svg>
    <svg width="16" height="16" viewBox="0 0 16 16" style="margin-left:5px"><rect x="1" y="1" width="14" height="14" fill="#fff" stroke="#777"/><path d="M4 5h8M4 8h8M4 11h8" stroke="#444" stroke-dasharray="2 1"/></svg>
  </div>
  <div class="tree">
    <div class="rows"><slot name="tree"></slot></div>
    <div class="vs"><span>${chev(CH_UP)}</span><b></b><span>${chev(CH_DOWN)}</span></div>
  </div>
  <div class="tool" style="height:24px">
    <svg width="16" height="16" viewBox="0 0 16 16"><path d="M8 1v14M1 8h14" stroke="${BLUE}" stroke-width="1.800"/></svg>
    <svg width="16" height="16" viewBox="0 0 16 16" style="margin-left:2px"><path d="M2 2l12 12M14 2L2 14" stroke="#e2704a" stroke-width="2.200"/></svg>
    <span class="p" style="margin-left:7px">+</span><span class="p" style="margin-left:1px">-</span>
    <input style="width:87px;margin-left:2px">
    <svg width="18" height="14" viewBox="0 0 18 14" style="margin-left:4px"><path d="M6 2h11v10H6L1 7z" fill="none" stroke="#ddd" stroke-width="1.200"/><path d="M9 5l4 4M13 5l-4 4" stroke="#ddd"/></svg>
    <svg width="16" height="16" viewBox="0 0 16 16" style="margin-left:3px"><path d="M8 2l7 12H1z" fill="#e4e4e4"/><path d="M8 6v4M8 11.500v1.500" stroke="#fff" stroke-width="1.300"/></svg>
    <svg width="10" height="6" viewBox="0 0 10 6" style="margin-left:6px"><path d="M1 0h8L5 5z" fill="#111"/></svg>
    <svg width="16" height="16" viewBox="0 0 16 16" style="margin-left:5px"><rect x="1" y="1" width="14" height="14" fill="#fff" stroke="#777"/><path d="M4 5h8M4 8h8M4 11h8" stroke="#444" stroke-dasharray="2 1"/></svg>
  </div>
  <div class="items">
    <div class="th"><span>Product</span><span>Usage</span><span>Usage</span></div>
    <div class="list"><slot name="items"></slot></div>
    <div class="hs">${chev(CH_LEFT)}<b></b>${chev(CH_RIGHT)}</div>
    <div class="mark"></div>
  </div>
  <div class="grip"><i></i><i></i><i></i><i></i><i></i></div>
  <div class="nav"><slot name="nav"></slot></div>
  <div style="height:27px"></div>
`);

def('tree-row', `
  <style>
    :host { display: flex; align-items: center; height: 18px; white-space: pre; }
    .t { width: 9px; height: 9px; box-sizing: border-box; border: 1px solid #8a8a8a; background: linear-gradient(#fff, #ddd); position: relative; flex: none; margin-right: 3px; }
    .t::before { content: ""; position: absolute; left: 1px; right: 1px; top: 3px; height: 1px; background: #111; }
    .t.plus::after { content: ""; position: absolute; top: 1px; bottom: 1px; left: 3px; width: 1px; background: #111; }
    svg { display: block; flex: none; margin-right: 5px; }
    .sw { width: 16px; height: 16px; box-sizing: border-box; flex: none; margin-right: 1px; }
  </style>
`, (el, root) => {
  if (root.querySelector('span')) return;
  let h = '';
  if (el.hasAttribute('swatch')) {
    let edge = el.hasAttribute('edge') ? 'border:1px solid #000;' : '';
    h += `<div class="sw" style="margin-left:34px;background:${el.getAttribute('swatch')};${edge}"></div>`;
  } else {
    let lvl = +el.getAttribute('level');
    let open = el.hasAttribute('open');
    h += `<div class="t ${open ? '' : 'plus'}" style="margin-left:${lvl ? 22 : 6}px"></div>${folder}`;
  }
  if (el.hasAttribute('tall')) el.style.height = '21px';
  h += '<span></span>';
  root.lastElementChild.insertAdjacentHTML('afterend', h);
  root.querySelector('span').textContent = el.getAttribute('label');
});

def('item-row', `
  <style>
    :host { display: grid; grid-template-columns: 122px 75px 1fr; align-items: center; height: 21px; white-space: pre; overflow: hidden; }
    .p { display: flex; align-items: center; overflow: hidden; }
    .sw { width: 16px; height: 16px; box-sizing: border-box; flex: none; margin: 0 1px 0 34px; }
    .n { overflow: hidden; width: 65px; }
    .a { padding-left: 6px; }
    .b { padding-left: 6px; overflow: hidden; }
    :host([selected]) { height: 18px; background: linear-gradient(90deg, #3c90e0 0, #3c90e0 26px, #0a72d0 26px); color: #fff; margin: 1px 0 0 1px; }
  </style>
  <div class="p"><div class="sw"></div><span class="n"></span></div><span class="a"></span><span class="b"></span>
`, (el, root) => {
  let sw = root.querySelector('.sw');
  sw.style.background = el.getAttribute('swatch');
  if (el.hasAttribute('edge')) sw.style.border = '1px solid #000';
  root.querySelector('.n').textContent = el.getAttribute('label');
  root.querySelector('.a').textContent = el.getAttribute('a') || '';
  root.querySelector('.b').textContent = el.getAttribute('b') || '';
});

def('nav-item', `
  <style>
    :host { display: flex; align-items: center; height: 28px; box-sizing: border-box; border-bottom: 1px solid #c4c8d0; background: #f4f4f4; font-weight: 500; font-size: 12.300px; }
    :host([active]) { background: #ebffff; }
    svg { display: block; width: 24px; height: 24px; margin: 0 8px 0 5px; flex: none; }
  </style>
  <svg viewBox="0 0 24 24"></svg><span></span>
`, (el, root) => {
  root.querySelector('svg').innerHTML = navIcons[el.getAttribute('icon')];
  root.querySelector('span').textContent = el.getAttribute('label');
});

// ------ drawing area: page coordinates, the svg viewBox starts at the canvas origin ------
let gridLines = '';
for (let x = 296; x < 1868; x += 133.2) gridLines += `<path d="M${x.toFixed(1)} 137V994"/>`;
for (let i = 0; i < 6; i++) {
  if (i == 3) continue;
  let y = 203.5 + i * 133.2;
  gridLines += `<path d="M250 ${y.toFixed(1)}H1868"/>`;
}

def('ms-canvas', `
  <style>
    :host { display: flex; position: relative; overflow: hidden; background: #fff; min-height: 0; }
    .area { flex: 1; position: relative; overflow: hidden; }
    .area > svg { display: block; position: absolute; left: 0; top: 0; }
    .vs { width: 16px; background: #f0f0f0; position: relative; display: flex; flex-direction: column; align-items: center; justify-content: space-between; padding: 3px 0; box-sizing: border-box; }
    .vs b { position: absolute; left: 1px; right: 1px; top: 415px; height: 25px; background: #cdcdcd; }
    .vs svg { display: block; }
    text { font: 14px Roboto, "Liberation Sans", sans-serif; fill: #1c8a55; text-anchor: middle; }
  </style>
  <div class="area">
    <svg width="1618" height="857" viewBox="250 137 1618 857">
      <defs><clipPath id="roomclip"><rect x="765" y="261" width="568" height="569"/></clipPath></defs>
      <g fill="none" stroke="#b4b4b4" stroke-width="1.500" stroke-dasharray="2 2">${gridLines}</g>
      <path d="M250 603H1868" stroke="#9a9a9a" stroke-width="1.500" stroke-dasharray="4 1 1 1" fill="none"/>
      <rect x="764.500" y="260.500" width="569" height="570" fill="#ffb537" stroke="#333"/>
      <path d="M765 261l16 17M1333 261l-17 17M765 830l16-17M1333 830l-17-17" stroke="#ffc860" fill="none"/>
      <rect x="782" y="279" width="533" height="533" fill="#30ec6c"/>
      <path d="M1314 548V812H1050z" fill="#80ff5a"/>
      <g clip-path="url(#roomclip)" fill="none" stroke="#1a9a50" stroke-opacity=".35" stroke-width="1.500" stroke-dasharray="2 2">${gridLines}<path d="M750 603H1340"/></g>
      <rect x="782" y="279" width="533" height="533" fill="none" stroke="#00ffff" stroke-width="3"/>
      <g fill="none" stroke="#15774a" stroke-width="1">
        <path d="M1314 547L1050 811"/>
        <path d="M1314 547A190 190 0 0 1 1085 575"/>
        <path d="M1086 599A190 190 0 0 1 1050 811"/>
      </g>
      <text x="1049" y="294">12'0"</text>
      <text x="1297" y="552">12'0"</text>
      <path d="M1628.500 541v18" stroke="#111"/>
      <path d="M1538 696H1378" stroke="#f5123c" stroke-width="4"/>
      <path d="M1361 696l23-8-3 8 3 8z" fill="#f5123c"/>
    </svg>
    <slot></slot>
  </div>
  <div class="vs"><span>${chev(CH_UP)}</span><b></b><span>${chev(CH_DOWN)}</span></div>
`);

def('ms-dialog', `
  <style>
    :host { display: flex; flex-direction: column; position: absolute; left: 580px; top: 293px; width: 260px; height: 168px; background: #fff; box-shadow: 0 12px 40px rgba(0,0,0,.38); font-size: 12px; }
    .bar { display: flex; align-items: center; height: 25px; background: #f2f2f2; flex: none; white-space: pre; }
    .logo { width: 16px; height: 16px; margin: 0 5px 0 3px; background: #4a9ae0; color: #fff; font: 12px/15px "Liberation Sans", sans-serif; text-align: center; }
    .bar svg { margin-left: auto; margin-right: 8px; display: block; }
    .body { padding: 7px 7px 0; display: flex; flex-direction: column; flex: 1; }
    .f { height: 24px; box-sizing: border-box; border: 1px solid #a8a8a8; display: flex; align-items: center; padding-left: 6px; flex: none; white-space: pre; }
    .f i { width: 16px; height: 16px; background: #ff0; margin-right: 1px; }
    p { margin: 0; line-height: 16px; white-space: nowrap; }
    .btns { position: relative; display: flex; margin-top: 10px; }
    .btn { height: 22px; box-sizing: border-box; border: 1px solid #777; background: #e1e1e1; display: flex; align-items: center; justify-content: center; }
    .mark { outline: 3px solid #e8173f; border-radius: 2px; }
  </style>
  <div class="bar"><div class="logo">m²</div><span>Assigning Floor Prep  SF</span><svg width="14" height="14" viewBox="0 0 14 14"><path d="M2 2l10 10M12 2L2 12" stroke="#222"/></svg></div>
  <div class="body">
    <div class="f"><i></i><span>Carpet Pad  SF</span></div>
    <p style="margin-top:11px">Append or replace above existing product(s)?</p>
    <p style="margin-top:16px">Tip: Press and hold Shift Key while dragging to</p>
    <p>append if it's possible.</p>
    <div class="btns">
      <div class="btn mark" style="width:44px;margin-left:15px">Append</div>
      <div class="btn" style="width:47px;margin-left:40px">Replace</div>
      <div class="btn" style="width:41px;margin-left:42px">Cancel</div>
    </div>
  </div>
`);

def('ms-callout', `
  <style>
    :host {
      display: block; position: absolute; left: 1133px; top: 425px; width: 500px; text-align: center;
      font: bold 34.300px/38.500px "Liberation Sans", sans-serif; color: #fff;
      -webkit-text-stroke: .5px #fff;
      text-shadow: 2.500px 0 0 #f04040, -2.500px 0 0 #f04040, 0 2.500px 0 #f04040, 0 -2.500px 0 #f04040,
        1.800px 1.800px 0 #f04040, -1.800px 1.800px 0 #f04040, 1.800px -1.800px 0 #f04040, -1.800px -1.800px 0 #f04040,
        1px 2.500px 0 #f04040, -1px 2.500px 0 #f04040, 1px -2.500px 0 #f04040, -1px -2.500px 0 #f04040,
        2.500px 1px 0 #f04040, -2.500px 1px 0 #f04040, 2.500px -1px 0 #f04040, -2.500px -1px 0 #f04040,
        2.500px 4px 1px #aaa;
    }
  </style>
  Notice the peel back<br>showing all items applied<br>underneath the main<br>product
`);

def('ms-tabbar', `
  <style>
    :host { display: flex; align-items: center; height: 17px; background: #fff; position: relative; white-space: nowrap; }
    svg { display: block; flex: none; }
    .n { color: #00008b; font-weight: 700; margin-left: 15px; font-size: 12px; padding-top: 4px; line-height: 13px; }
    .s { width: 1px; height: 16px; background: #999; margin-left: 7px; }
    .hs { display: flex; align-items: center; height: 17px; width: 153px; background: #f0f0f0; box-sizing: border-box; border: solid #cfcfcf; border-width: 0 3px; margin-right: 5px; flex: none; }
    .hs span { width: 17px; display: flex; justify-content: center; }
    .tr { flex: 1; height: 15px; background: #fff; position: relative; }
    .tr b { position: absolute; left: 51px; width: 8px; top: 0; bottom: 0; background: #cdcdcd; }
    .sl { width: 140px; height: 17px; position: relative; margin-right: 5px; flex: none; }
    .sl i { position: absolute; left: 0; right: 0; top: 6px; height: 4px; border: 1px solid #d6d6d6; background: #e4e4e4; box-sizing: border-box; }
    .sl b { position: absolute; left: 88px; top: 0; width: 11px; height: 17px; box-sizing: border-box; background: #eee; border: 1px solid #aaa; border-radius: 1px; }
  </style>
  <svg width="10" height="6" viewBox="0 0 10 6" style="margin-left:4px"><path d="M5 1l4 4H1z" fill="#111"/></svg>
  <svg width="14" height="14" viewBox="0 0 14 14" style="margin-left:4px"><path d="M7 1v12M1 7h12" stroke="${BLUE}" stroke-width="1.500"/></svg>
  <svg width="6" height="10" viewBox="0 0 6 10" style="margin-left:4px"><path d="M5 1v8L1 5z" fill="#111"/></svg>
  <span class="n">Main Floor</span><div class="s"></div>
  <svg width="6" height="10" viewBox="0 0 6 10" style="margin-left:auto;margin-right:3px"><path d="M1 1v8l4-4z" fill="#111"/></svg>
  <div class="hs"><span>${chev(CH_LEFT)}</span><div class="tr"><b></b></div><span>${chev(CH_RIGHT)}</span></div>
  <div class="sl"><i></i><b></b></div>
`);

def('ms-status', `
  <style>
    :host { display: flex; align-items: center; height: 19px; box-sizing: border-box; padding: 1px 0 0 1px; background: #f2f2f2; font-size: 12.200px; white-space: nowrap; }
    b { color: #d8281c; font-weight: 700; }
    svg { display: block; }
    .r { margin-left: auto; display: flex; align-items: center; gap: 3px; margin-right: 4px; }
    .sq { width: 12px; height: 12px; box-sizing: border-box; border: 2px solid #555; }
  </style>
  <span>Drop to assign the product to an area. <b>Right click</b> to cancel and return to ready. - Aligning on 1/2</span>
  <div class="r">
    <svg width="13" height="13" viewBox="0 0 13 13"><path d="M1 6l5.500-5 5.500 5M1 12l5.500-5 5.500 5" fill="none" stroke="#333"/></svg>
    <div class="sq"></div>
  </div>
`);

def('ms-strip', `
  <style>
    :host { display: flex; flex-direction: column; background: #fafafa; }
    svg { display: block; }
    .top { height: 24px; display: flex; align-items: center; justify-content: center; padding-left: 7px; background: #fff; }
    .fill { flex: 1; }
    .grip { height: 5px; display: flex; justify-content: center; align-items: center; gap: 2px; border-bottom: 1px solid #ccc; }
    .grip i { width: 2px; height: 2px; background: #777; }
    .b { height: 27px; display: flex; align-items: center; justify-content: center; border-bottom: 1px solid #ccc; }
    .foot { height: 27px; }
  </style>
  <div class="top"><svg width="14" height="14" viewBox="0 0 14 14"><path d="M7 3L3 7l4 4M11 3L7 7l4 4" fill="none" stroke="#555" stroke-width="1.200"/></svg></div>
  <div class="fill"></div>
  <div class="grip"><i></i><i></i><i></i><i></i><i></i></div>
  <div class="b" style="background:#ebffff"><svg width="22" height="22" viewBox="0 0 22 22"><rect x=".5" y=".5" width="21" height="21" fill="#fff" stroke="#777"/><rect x="1" y="1" width="20" height="4" fill="#8c4fa0"/><rect x="2" y="8" width="9" height="9" fill="#8c4fa0"/><path d="M13 8h7M13 10.500h7M13 13h7M13 15.500h7" stroke="#666"/></svg></div>
  <div class="b"><svg width="22" height="22" viewBox="0 0 22 22"><rect x=".5" y=".5" width="21" height="21" fill="#fff" stroke="#777"/><rect x="1" y="1" width="20" height="4" fill="#4aa080"/><path d="M6 8l11 5-11 5zM5 7v12" fill="none" stroke="${BLUE}" stroke-width="1.600"/></svg></div>
  <div class="b"><svg width="22" height="22" viewBox="0 0 22 22"><rect x=".5" y=".5" width="21" height="21" fill="#fff" stroke="#777"/><rect x="1" y="1" width="20" height="4" fill="${BLUE}"/><rect x="6.500" y="8.500" width="9" height="10" fill="#fff" stroke="${BLUE}"/><rect x="8" y="10" width="4" height="2" fill="#aaa"/></svg></div>
  <div class="foot"></div>
`);
</script>
</body>
</html>
